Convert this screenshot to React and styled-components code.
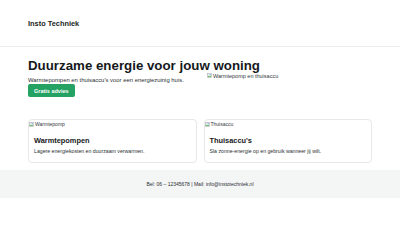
import React from 'react';
import styled, { createGlobalStyle } from 'styled-components';

const GlobalStyle = createGlobalStyle`
    html, body { margin: 0; padding: 0; background: #ffffff; }
    body {
        font-family: "Liberation Sans", Arial, Helvetica, sans-serif;
        color: #1f2326;
    }
`;

const products = [
    { title: 'Warmtepompen', alt: 'Warmtepomp', text: 'Lagere energiekosten en duurzaam verwarmen.' },
    { title: "Thuisaccu's", alt: 'Thuisaccu', text: 'Sla zonne-energie op en gebruik wanneer jij wilt.' },
];

const BrokenIcon = () => (
    <svg width="5" height="5" viewBox="0 0 16 16">
        <rect x="1" y="1" width="14" height="14" fill="#f2f2f2" stroke="#9aa0a6" strokeWidth="1.5" />
        <path d="M2 13 L6 8 L9 11 L11 9 L14 13 Z" fill="#5bb55b" />
        <circle cx="10" cy="5" r="2" fill="#5a9fe0" />
    </svg>
);

const App = () => {
    return (
        <>
            <GlobalStyle />
            <Header>
                <Brand>Insto Techniek</Brand>
            </Header>
            <Hero>
                <HeroText>
                    <h1>Duurzame energie voor jouw woning</h1>
                    <p>Warmtepompen en thuisaccu's voor een energiezuinig huis.</p>
                    <Button>Gratis advies</Button>
                </HeroText>
                <AltImage>
                    <BrokenIcon />Warmtepomp en thuisaccu
                </AltImage>
            </Hero>
            <Cards>
                {products.map((p) => (
                    <Card key={p.title}>
                        <AltImage $small>
                            <BrokenIcon />{p.alt}
                        </AltImage>
                        <CardBody>
                            <h3>{p.title}</h3>
                            <p>{p.text}</p>
                        </CardBody>
                    </Card>
                ))}
            </Cards>
            <Footer>Bel: 06 – 12345678 | Mail: info@instotechniek.nl</Footer>
        </>
    );
}

export default App;

const Header = styled.header`
    height: 46px;
    border-bottom: 1px solid #ededed;
    display: flex;
    align-items: center;
    padding: 0 28px;
`;

const Brand = styled.div`
    font-size: 7.4px;
    font-weight: bold;
    color: #1c1f22;
`;

const Hero = styled.section`
    display: grid;
    grid-template-columns: minmax(0, 1fr) minmax(0, 1fr);
    gap: 12px;
    align-items: center;
    padding: 11px 28px 22px;
`;

const HeroText = styled.div`
    h1 {
        margin: 0 0 2px;
        font-size: 13.3px;
        line-height: 16px;
        font-weight: bold;
        white-space: nowrap;
        color: #16191c;
    }
    p {
        margin: 0;
        font-size: 5.9px;
        line-height: 8px;
        color: #2b2f33;
    }
`;

const Button = styled.button`
    display: block;
    border: none;
    border-radius: 2px;
    background: #23a263;
    color: #ffffff;
    font-family: inherit;
    font-size: 5.5px;
    font-weight: bold;
    height: 13px;
    padding: 0 6px;
    cursor: pointer;
`;

const AltImage = styled.div`
    display: flex;
    align-items: center;
    gap: 1px;
    font-size: ${(p) => (p.$small ? '5px' : '5.5px')};
    line-height: 6px;
    color: #33383d;
    padding-left: ${(p) => (p.$small ? '0' : '1px')};
    margin-bottom: ${(p) => (p.$small ? '0' : '4px')};
`;

const Cards = styled.section`
    display: grid;
    grid-template-columns: minmax(0, 1fr) minmax(0, 1fr);
    gap: 7px;
    padding: 0 28px 7px;
`;

const Card = styled.div`
    border: 1px solid #e8e8e8;
    border-radius: 4px;
    padding-top: 1px;
    overflow: hidden;
`;

const CardBody = styled.div`
    padding: 9px 5px 7px;
    h3 {
        margin: 0 0 3px;
        font-size: 7.4px;
        line-height: 9px;
        font-weight: bold;
        color: #16191c;
    }
    p {
        margin: 0;
        font-size: 5.2px;
        line-height: 7px;
        color: #2b2f33;
    }
`;

const Footer = styled.footer`
    background: #f4f5f5;
    height: 28px;
    display: flex;
    align-items: center;
    justify-content: center;
    font-size: 5px;
    color: #2b2f33;
`;
